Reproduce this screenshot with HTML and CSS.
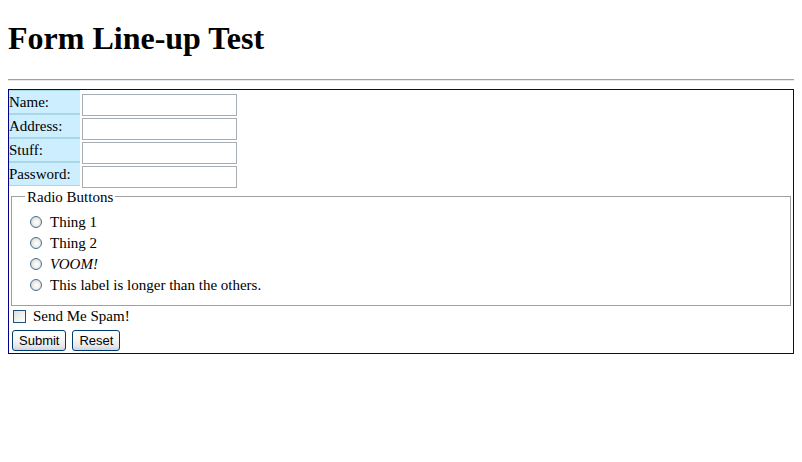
FILE: index.html
```html
<!DOCTYPE html>
<html>
<head>
<meta charset="utf-8">
<title>Form Line-up Test</title>
<link rel="stylesheet" href="styles.css">
</head>
<body>
<h1 class="title">Form Line-up Test</h1>
<hr class="rule">
<form class="lineup">
  <div class="row"><label class="lbl" for="f-name">Name:</label><input class="txt" id="f-name" type="text"></div>
  <div class="row"><label class="lbl" for="f-addr">Address:</label><input class="txt" id="f-addr" type="text"></div>
  <div class="row"><label class="lbl" for="f-stuff">Stuff:</label><input class="txt" id="f-stuff" type="text"></div>
  <div class="row"><label class="lbl" for="f-pw">Password:</label><input class="txt" id="f-pw" type="password"></div>
  <fieldset class="radios">
    <legend class="legend">Radio Buttons</legend>
    <label class="opt"><input class="radio" type="radio" name="r">Thing 1</label>
    <label class="opt"><input class="radio" type="radio" name="r">Thing 2</label>
    <label class="opt"><input class="radio" type="radio" name="r"><em>VOOM!</em></label>
    <label class="opt"><input class="radio" type="radio" name="r">This label is longer than the others.</label>
  </fieldset>
  <label class="spam"><input class="check" type="checkbox">Send Me Spam!</label>
  <div class="btns"><button class="btn" type="submit">Submit</button><button class="btn" type="reset">Reset</button></div>
</form>
</body>
</html>
```
FILE: styles.css
```css
html, body {
  background: #ffffff;
}
body {
  margin: 0 8px 8px;
  padding: 0;
  font-family: "Liberation Serif", "Times New Roman", serif;
  font-size: 15px;
  color: #000;
}
.title {
  font-size: 32px;
  font-weight: bold;
  line-height: 36.8px;
  margin: 20.4px 0 21.4px;
}
.rule {
  height: 0;
  border: 0;
  border-top: 1px solid #a0a0a0;
  border-bottom: 1px solid #e8e8e8;
  margin: 8px 0;
}
.lineup {
  margin: 0;
  padding: 0;
  border: 1px solid #00008b;
}
.row {
  display: flex;
  align-items: flex-start;
  height: 24px;
}
.lbl {
  box-sizing: border-box;
  width: 71px;
  height: 24px;
  background: #cceeff;
  border-top: 1px solid #a8d8e8;
  border-bottom: 1px solid #a8d8e8;
  line-height: 23px;
}
.txt {
  box-sizing: border-box;
  width: 155px;
  height: 22px;
  margin: 4px 0 0 2px;
  padding: 1px 2px;
  border: 1px solid #a5acb2;
  background: #fff;
  font: 13px "Liberation Sans", Arial, sans-serif;
}
.radios {
  margin: 2px 2px 0;
  padding: 6px 13px 9px;
  border: 1px solid #a0a0a0;
  box-shadow: inset 1px 1px 0 #ffffff, 1px 1px 0 #ffffff;
}
.legend {
  padding: 0 2px;
  line-height: 18px;
}
.opt {
  display: flex;
  align-items: center;
  height: 21px;
  line-height: 21px;
}
.radio {
  appearance: none;
  -webkit-appearance: none;
  box-sizing: border-box;
  width: 12px;
  height: 12px;
  margin: 0 8px 0 5px;
  border: 1px solid #4a6f8f;
  border-radius: 50%;
  background: radial-gradient(circle at 55% 55%, #ffffff 0%, #f2f2f0 35%, #c8c8c4 100%);
}
.spam {
  display: flex;
  align-items: center;
  height: 21px;
  line-height: 21px;
}
.check {
  appearance: none;
  -webkit-appearance: none;
  box-sizing: border-box;
  width: 13px;
  height: 13px;
  margin: 0 7px 0 4px;
  border: 1px solid #1c5180;
  background: linear-gradient(135deg, #dcdcd7 0%, #f4f4f1 60%, #ffffff 100%);
}
.btns {
  display: flex;
  gap: 6px;
  padding: 3px 0 2px 3px;
}
.btn {
  box-sizing: border-box;
  height: 21px;
  margin: 0;
  padding: 0 6px;
  border: 1px solid #003c74;
  border-radius: 3px;
  background: linear-gradient(to bottom, #ffffff 0%, #f6f6f4 45%, #e6e6ea 80%, #d2d2de 100%);
  font: 13px "Liberation Sans", Arial, sans-serif;
  color: #000;
}
```
